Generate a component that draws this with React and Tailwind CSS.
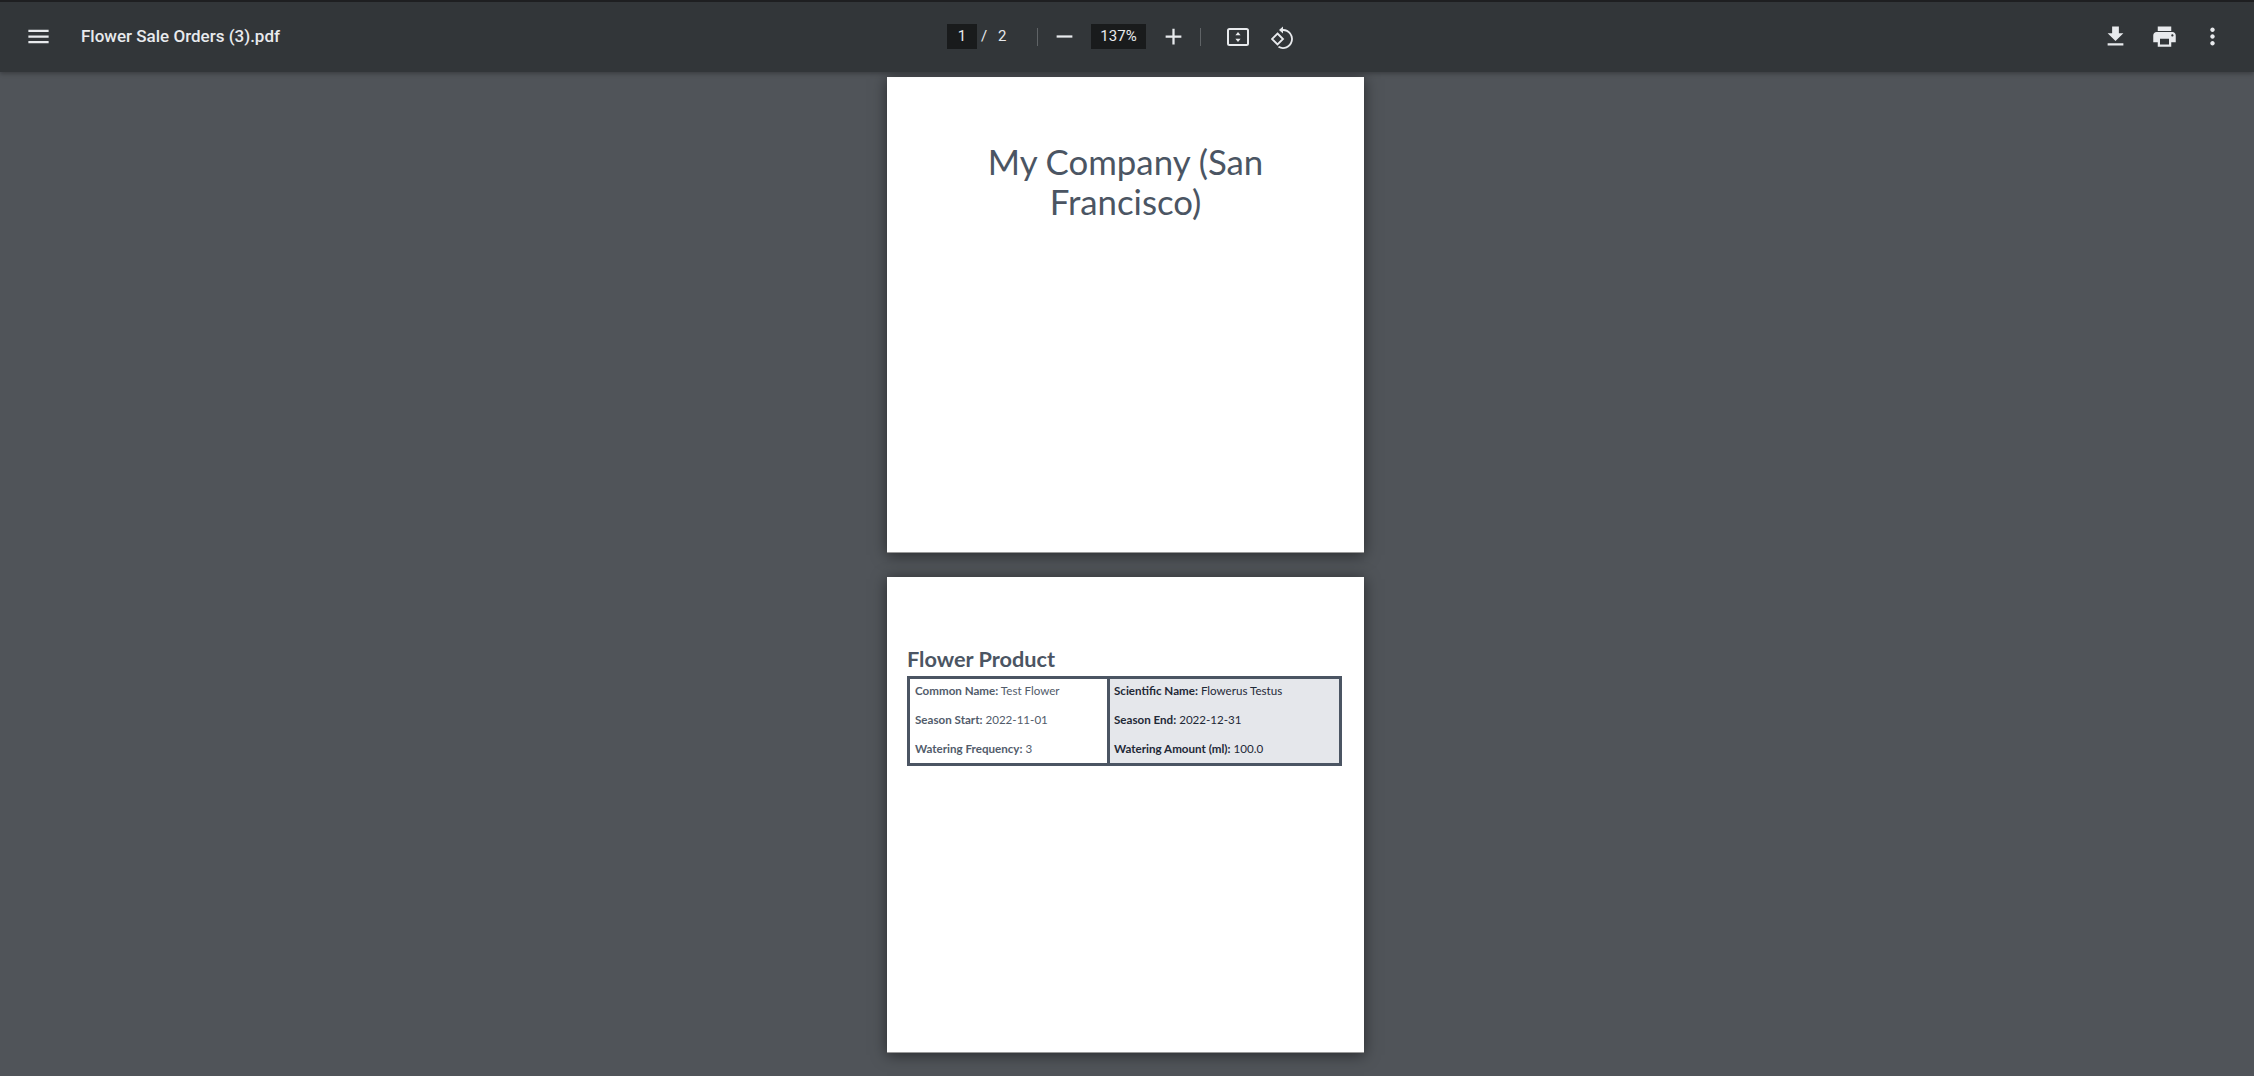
const P = ({ d, x = 27 }) => (
  <svg width={x} height={x} viewBox="0 0 24 24" fill="currentColor" className="shrink-0"><path d={d} /></svg>
);
const Row = ({ k, v }) => (
  <p className="leading-[12px] h-[12px] whitespace-nowrap"><b className="font-bold">{k}:</b> {v}</p>
);
export default function App() {
  return (
    <div className="h-screen overflow-hidden flex flex-col bg-[#505459] text-[#e8eaed]" style={{ fontFamily: 'Roboto, sans-serif' }}>
      <div className="h-[2px] bg-[#1f2022] shrink-0" />
      <header className="relative z-10 h-[70px] shrink-0 bg-[#323639] flex items-center shadow-[0_2px_4px_rgba(0,0,0,0.25)] pb-[1px]">
        <div className="w-[947px] shrink-0 flex items-center pl-[25px]">
          <P d="M3 18h18v-2H3v2zm0-5h18v-2H3v2zm0-7v2h18V6H3z" />
          <span className="ml-[29px] text-[17px] font-medium whitespace-nowrap">Flower Sale Orders (3).pdf</span>
        </div>
        <div className="flex items-center text-[15px]">
          <div className="w-[30px] h-[25px] bg-[#191b1c] flex items-center justify-center">1</div>
          <span className="ml-[4px] w-[8px]">/</span>
          <span className="ml-[9px] w-[10px]">2</span>
          <div className="ml-[29px] w-px h-[18px] bg-[#5f6366]" />
          <div className="ml-[13px]"><P d="M19 13H5v-2h14v2z" /></div>
          <div className="ml-[13px] w-[55px] h-[25px] bg-[#191b1c] flex items-center justify-center">137%</div>
          <div className="ml-[14px]"><P d="M19 13h-6v6h-2v-6H5v-2h6V5h2v6h6v2z" /></div>
          <div className="ml-[13px] w-px h-[18px] bg-[#5f6366]" />
          <div className="ml-[26px]">
            <svg width="24" height="24" viewBox="0 0 24 24" fill="none" className="shrink-0">
              <rect x="1" y="4" width="20" height="16" rx="1.5" stroke="currentColor" strokeWidth="2" />
              <path d="M11 7l2.6 3.2H8.4zM11 17l-2.6-3.2h5.2z" fill="currentColor" />
            </svg>
          </div>
          <div className="ml-[20px]">
            <svg width="24" height="24" viewBox="0 0 24 24" fill="none" stroke="currentColor" strokeWidth="1.8" className="shrink-0">
              <path d="M10 5h2a9 9 0 1 1-4.5 16.8" />
              <path d="M12 1.5 8 5l4 3.5z" fill="currentColor" stroke="none" />
              <path d="M6.5 8.5 12 14l-5.5 5.5L1 14z" />
            </svg>
          </div>
        </div>
        <div className="flex-1 flex items-center justify-end pr-[28px]">
          <P d="M19 9h-4V3H9v6H5l7 7 7-7zM5 18v2h14v-2H5z" />
          <div className="ml-[22px]"><P d="M19 8H5c-1.66 0-3 1.34-3 3v6h4v4h12v-4h4v-6c0-1.66-1.34-3-3-3zm-3 11H8v-5h8v5zm3-7c-.55 0-1-.45-1-1s.45-1 1-1 1 .45 1 1-.45 1-1 1zm-1-9H6v4h12V3z" /></div>
          <div className="ml-[21px]"><P d="M12 8c1.1 0 2-.9 2-2s-.9-2-2-2-2 .9-2 2 .9 2 2 2zm0 2c-1.1 0-2 .9-2 2s.9 2 2 2 2-.9 2-2-.9-2-2-2zm0 6c-1.1 0-2 .9-2 2s.9 2 2 2 2-.9 2-2-.9-2-2-2z" /></div>
        </div>
      </header>
      <main className="flex-1 flex flex-col items-center gap-[24px] pt-[5px] pr-[3px] overflow-hidden" style={{ fontFamily: 'Lato, sans-serif' }}>
        <section className="w-[477px] h-[476px] shrink-0 bg-white shadow-[0_2px_14px_rgba(0,0,0,0.5)] border-b border-[#999] pt-[65px] text-center text-[#4b5563] text-[34.8px] leading-[40px]">
          My Company (San<br />Francisco)
        </section>
        <section className="w-[477px] h-[476px] shrink-0 bg-white shadow-[0_2px_14px_rgba(0,0,0,0.5)] border-b border-[#999] pt-[69px] pl-[20px] text-[#4b5563]">
          <h2 className="text-[21.7px] leading-[26px] font-bold">Flower Product</h2>
          <div className="w-[435px] h-[90px] border-[3px] border-[#4b5563] flex text-[11.6px] mt-[4px]">
            <div className="w-[200px] border-r-[3px] border-[#4b5563] text-[#525c6b] pl-[5px] pt-[6px] flex flex-col gap-[17px]">
              <Row k="Common Name" v="Test Flower" />
              <Row k="Season Start" v="2022-11-01" />
              <Row k="Watering Frequency" v="3" />
            </div>
            <div className="flex-1 bg-[#e5e7eb] text-[#1f2937] pl-[4px] pt-[6px] flex flex-col gap-[17px]">
              <Row k="Scientific Name" v="Flowerus Testus" />
              <Row k="Season End" v="2022-12-31" />
              <Row k="Watering Amount (ml)" v="100.0" />
            </div>
          </div>
        </section>
      </main>
    </div>
  );
}
